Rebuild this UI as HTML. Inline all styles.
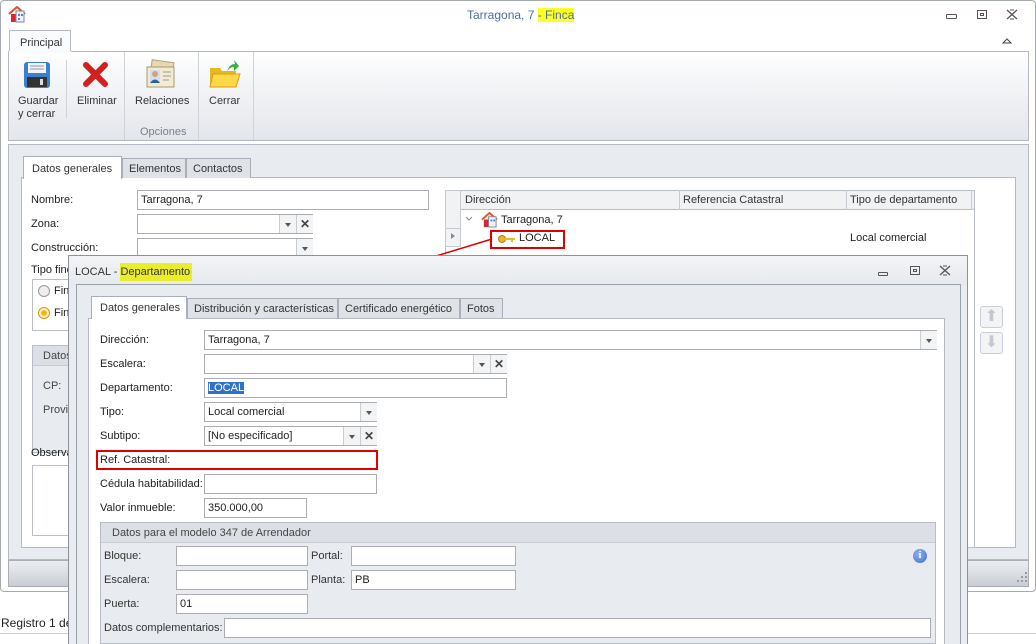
<!DOCTYPE html>
<html><head><meta charset="utf-8">
<style>
*{box-sizing:border-box;margin:0;padding:0}
html,body{width:1036px;height:644px;overflow:hidden}
body{background:#fff;font-family:"Liberation Sans",sans-serif;font-size:11px;color:#1e1e1e;position:relative}
.a{position:absolute}
.in{position:absolute;background:#fff;border:1px solid #abadb3;height:20px;padding:3px 3px;line-height:13px;white-space:nowrap}
.lbl{position:absolute;white-space:nowrap;line-height:13px}
.dd{position:absolute;top:0;bottom:0;width:17px;border-left:1px solid #c9ccd1;background:#f3f4f6}
.dd:after{content:"";position:absolute;left:5px;top:8px;border:3.5px solid transparent;border-top:4px solid #555}
.xb{position:absolute;top:0;bottom:0;width:17px;border-left:1px solid #c9ccd1;background:#f3f4f6;text-align:center;font-weight:bold;font-size:12px;line-height:18px;color:#444}
.tab{position:absolute;height:20px;border:1px solid #a9afb9;border-bottom:none;background:#dfe3e8;padding:4px 6px;line-height:13px;color:#333;white-space:nowrap;overflow:hidden}
.tab.on{background:#fff;height:23px}
.grp{position:absolute;border:1px solid #b9bec6;background:#e8ebf0}
.gh{position:absolute;left:0;right:0;top:0;height:20px;background:#dce0e6;border-bottom:1px solid #c7ccd3;padding:4px 10px;color:#444;white-space:nowrap;overflow:hidden}
</style></head><body>
<!-- main window -->
<div class="a" style="left:0;top:0;width:1036px;height:592px;border:1px solid #a5a9b0;border-radius:4px;background:#fff"></div>
<svg class="a" style="left:8px;top:6px" width="18" height="17" viewBox="0 0 18 17"><path d="M1 8 L9 1 L17 8" fill="none" stroke="#e05020" stroke-width="2"/><rect x="3" y="8" width="5" height="8" fill="#d23"/><rect x="8" y="5" width="8" height="11" fill="#eef3fa" stroke="#7a8aa0"/><rect x="10" y="8" width="2" height="2" fill="#4a8ad0"/><rect x="13" y="8" width="2" height="2" fill="#4a8ad0"/><rect x="10" y="12" width="2" height="2" fill="#4a8ad0"/></svg>
<div class="lbl" style="left:467px;top:9px;color:#4a6fa5;font-size:12px">Tarragona, 7 <span style="background:#ffff22;color:#4a6fa5">- Finca</span></div>
<div class="a" style="left:946px;top:14px;width:11px;height:5px;border:1px solid #555;border-radius:1px"></div>
<div class="a" style="left:977px;top:10px;width:10px;height:9px;border:1px solid #555"><div class="a" style="left:2px;top:2px;width:4px;height:3px;border:1px solid #555"></div></div>
<svg class="a" style="left:1006px;top:9px" width="12" height="11"><path d="M1 1L11 10M11 1L1 10" stroke="#555" stroke-width="1.3"/><path d="M4 1h4M4 10h4" stroke="#555"/></svg>
<svg class="a" style="left:1002px;top:37px" width="10" height="7"><path d="M1 6L5 2L9 6Z" fill="none" stroke="#444"/></svg>
<!-- ribbon -->
<div class="tab on" style="left:9px;top:30px;width:62px;height:22px;background:#fafbfc;padding:6px 10px;border-color:#b4b9c1;font-size:11px">Principal</div>
<div class="a" style="left:8px;top:51px;width:1021px;height:90px;border:1px solid #b4b9c1;background:linear-gradient(#fff,#f5f6f8 30%,#e3e6eb)"></div>
<div class="a" style="left:71px;top:51px;width:958px;height:1px;background:#b4b9c1"></div>
<div class="a" style="left:9px;top:51px;width:62px;height:2px;background:#fafbfc"></div>
<div class="a" style="left:66px;top:60px;width:1px;height:58px;background:#cfd3d9"></div>
<div class="a" style="left:124px;top:52px;width:1px;height:88px;background:#cfd3d9"></div>
<div class="a" style="left:198px;top:52px;width:1px;height:88px;background:#cfd3d9"></div>
<div class="a" style="left:253px;top:52px;width:1px;height:88px;background:#cfd3d9"></div>
<svg class="a" style="left:23px;top:61px" width="28" height="28" viewBox="0 0 28 28"><rect x="1" y="1" width="26" height="26" rx="3" fill="#3a7fd0"/><rect x="5" y="2" width="18" height="10" fill="#f4f6fa"/><path d="M7 5h14M7 8h14" stroke="#8899aa"/><rect x="4" y="16" width="20" height="10" fill="#333"/><rect x="17" y="18" width="3" height="6" fill="#ddd"/></svg>
<svg class="a" style="left:83px;top:62px" width="25" height="25" viewBox="0 0 25 25"><path d="M3 3L22 22M22 3L3 22" stroke="#d4201c" stroke-width="6" stroke-linecap="round"/></svg>
<svg class="a" style="left:145px;top:59px" width="32" height="32" viewBox="0 0 32 32"><rect x="6" y="2" width="22" height="16" fill="#e8d8b0" stroke="#b0a080" transform="rotate(8 16 10)"/><rect x="2" y="8" width="27" height="20" fill="#f3ead0" stroke="#a89870"/><rect x="5" y="11" width="10" height="13" fill="#cfe0f0"/><circle cx="10" cy="15" r="3" fill="#d9a070"/><path d="M5 24q5-7 10 0" fill="#2a5fa8"/><path d="M18 13h8M18 17h8M18 21h6" stroke="#999"/></svg>
<svg class="a" style="left:209px;top:58px" width="32" height="32" viewBox="0 0 32 32"><path d="M1 10h10l2 3h14v16H1z" fill="#e8b820"/><path d="M4 16h27l-4 13H1z" fill="#ffd84a" stroke="#d9a010"/><path d="M18 14q2-8 8-8l-1-4 5 6-5 5v-4q-5 0-7 5z" fill="#3ab040"/></svg>
<div class="lbl" style="left:18px;top:95px;color:#333">Guardar<br>y cerrar</div>
<div class="lbl" style="left:77px;top:95px;color:#333">Eliminar</div>
<div class="lbl" style="left:135px;top:95px;color:#333">Relaciones</div>
<div class="lbl" style="left:209px;top:95px;color:#333">Cerrar</div>
<div class="lbl" style="left:140px;top:126px;color:#7a7f88">Opciones</div>
<!-- body -->
<div class="a" style="left:8px;top:144px;width:1021px;height:416px;background:#e8ebf0;border:1px solid #b4b9c1"></div>
<div class="a" style="left:8px;top:560px;width:1021px;height:27px;background:linear-gradient(#eceef1,#c9cdd3);border:1px solid #a9aeb6"></div>
<svg class="a" style="left:1016px;top:571px" width="12" height="12"><g fill="#999"><rect x="9" y="1" width="2" height="2"/><rect x="5" y="5" width="2" height="2"/><rect x="9" y="5" width="2" height="2"/><rect x="1" y="9" width="2" height="2"/><rect x="5" y="9" width="2" height="2"/><rect x="9" y="9" width="2" height="2"/></g></svg>
<div class="a" style="left:21px;top:177px;width:995px;height:371px;background:#fff;border:1px solid #b4b9c1"></div>
<div class="tab on" style="left:23px;top:156px;width:99px;padding:6px 8px">Datos generales</div>
<div class="tab" style="left:122px;top:158px;width:64px">Elementos</div>
<div class="tab" style="left:186px;top:158px;width:65px">Contactos</div>
<div class="lbl" style="left:31px;top:194px">Nombre:</div>
<div class="in" style="left:137px;top:190px;width:292px">Tarragona, 7</div>
<div class="lbl" style="left:31px;top:218px">Zona:</div>
<div class="in" style="left:137px;top:214px;width:176px"><div class="dd" style="right:16px"></div><div class="xb" style="right:-1px;width:17px">✕</div></div>
<div class="lbl" style="left:31px;top:242px">Construcción:</div>
<div class="in" style="left:137px;top:238px;width:176px"><div class="dd" style="right:-1px"></div></div>
<div class="lbl" style="left:31px;top:264px">Tipo finca</div>
<div class="a" style="left:32px;top:279px;width:50px;height:52px;border:1px solid #b9bec6"></div>
<div class="a" style="left:38px;top:285px;width:12px;height:12px;border-radius:50%;border:1px solid #999;background:#eee"></div>
<div class="lbl" style="left:54px;top:285px">Fin</div>
<div class="a" style="left:38px;top:307px;width:12px;height:12px;border-radius:50%;border:1px solid #c90;background:radial-gradient(#ffb000 35%,#fff4d0 45%)"></div>
<div class="lbl" style="left:54px;top:307px">Fin</div>
<div class="grp" style="left:32px;top:345px;width:50px;height:108px"><div class="gh">Datos</div></div>
<div class="lbl" style="left:43px;top:380px;color:#444">CP:</div>
<div class="lbl" style="left:43px;top:404px;color:#444">Provi</div>
<div class="lbl" style="left:31px;top:447px">Observa</div>
<div class="a" style="left:32px;top:465px;width:50px;height:71px;border:1px solid #b9bec6"></div>
<!-- grid -->
<div class="a" style="left:445px;top:190px;width:530px;height:358px;border:1px solid #b9bec6;background:#fff"></div>
<div class="a" style="left:445px;top:190px;width:530px;height:20px;background:#f1f2f4;border:1px solid #b9bec6"></div>
<div class="a" style="left:445px;top:190px;width:16px;height:57px;background:#f1f2f4;border:1px solid #c8ccd2"></div>
<div class="a" style="left:445px;top:228px;width:16px;height:19px;border:1px solid #c8ccd2"></div>
<div class="a" style="left:451px;top:233px;border:3.5px solid transparent;border-left:4px solid #888"></div>
<div class="a" style="left:679px;top:190px;width:1px;height:20px;background:#c8ccd2"></div>
<div class="a" style="left:846px;top:190px;width:1px;height:20px;background:#c8ccd2"></div>
<div class="a" style="left:971px;top:190px;width:1px;height:20px;background:#c8ccd2"></div>
<div class="lbl" style="left:465px;top:194px;color:#333">Dirección</div>
<div class="lbl" style="left:683px;top:194px;color:#333">Referencia Catastral</div>
<div class="lbl" style="left:850px;top:194px;color:#333">Tipo de departamento</div>
<svg class="a" style="left:465px;top:216px" width="8" height="6"><path d="M1 1L4 4L7 1" fill="none" stroke="#888"/></svg>
<svg class="a" style="left:481px;top:212px" width="17" height="16" viewBox="0 0 18 17"><path d="M1 8 L9 1 L17 8" fill="none" stroke="#e05020" stroke-width="2"/><rect x="3" y="8" width="5" height="8" fill="#d23"/><rect x="8" y="5" width="8" height="11" fill="#eef3fa" stroke="#7a8aa0"/><rect x="10" y="8" width="2" height="2" fill="#4a8ad0"/><rect x="13" y="8" width="2" height="2" fill="#4a8ad0"/></svg>
<div class="lbl" style="left:501px;top:214px">Tarragona, 7</div>
<div class="a" style="left:490px;top:230px;width:75px;height:19px;border:2px solid #e00000"></div>
<svg class="a" style="left:498px;top:234px" width="18" height="10"><circle cx="4" cy="5" r="3.5" fill="#e8b830" stroke="#b08010"/><path d="M7 4h10v2h-2v2h-2V6H7z" fill="#e8b830"/></svg>
<div class="lbl" style="left:519px;top:232px">LOCAL</div>
<div class="lbl" style="left:850px;top:232px">Local comercial</div>
<svg class="a" style="left:390px;top:235px" width="105" height="40"><line x1="102" y1="4" x2="10" y2="32" stroke="#e00000" stroke-width="1.5"/><path d="M5 34 L16 26 L15 34 Z" fill="#e00000"/></svg>
<div class="a" style="left:980px;top:306px;width:23px;height:22px;border:1px solid #ccd;border-radius:3px;background:#f3f4f6;color:#c4c7cc;text-align:center;font-size:16px;line-height:20px">&#x2B06;</div>
<div class="a" style="left:980px;top:332px;width:23px;height:22px;border:1px solid #ccd;border-radius:3px;background:#f3f4f6;color:#c4c7cc;text-align:center;font-size:16px;line-height:20px">&#x2B07;</div>
<div class="lbl" style="left:1px;top:617px;font-size:12px">Registro 1 de</div>
<div class="a" style="left:0;top:633px;width:1036px;height:1px;background:#ccc"></div>
<!-- dialog -->
<div class="a" style="left:68px;top:255px;width:900px;height:392px;background:#e9ecf0;border:1px solid #8d929a"></div>
<div class="a" style="left:69px;top:256px;width:898px;height:30px;background:linear-gradient(#f2f4f6,#e6e9ed)"></div>
<div class="lbl" style="left:75px;top:266px;color:#333">LOCAL - <span style="background:#eaee2a;padding:3px 2px 3px 0">Departamento</span></div>
<div class="a" style="left:878px;top:272px;width:10px;height:4px;border:1px solid #555;border-radius:1px"></div>
<div class="a" style="left:910px;top:266px;width:10px;height:9px;border:1px solid #555"><div class="a" style="left:2px;top:2px;width:4px;height:3px;border:1px solid #555"></div></div>
<svg class="a" style="left:939px;top:265px" width="12" height="11"><path d="M1 1L11 10M11 1L1 10" stroke="#555" stroke-width="1.3"/><path d="M4 1h4M4 10h4" stroke="#555"/></svg>
<div class="a" style="left:76px;top:284px;width:885px;height:370px;border:1px solid #9aa0a8;background:#e8ebf0"></div>
<div class="a" style="left:88px;top:318px;width:857px;height:340px;background:#fff;border:1px solid #b4b9c1"></div>
<div class="tab on" style="left:91px;top:296px;width:96px;padding:5px 8px">Datos generales</div>
<div class="tab" style="left:187px;top:298px;width:151px">Distribución y características</div>
<div class="tab" style="left:338px;top:298px;width:122px">Certificado energético</div>
<div class="tab" style="left:460px;top:298px;width:43px">Fotos</div>
<div class="lbl" style="left:100px;top:334px">Dirección:</div>
<div class="in" style="left:204px;top:330px;width:733px">Tarragona, 7<div class="dd" style="right:-1px"></div></div>
<div class="lbl" style="left:100px;top:358px">Escalera:</div>
<div class="in" style="left:204px;top:354px;width:303px"><div class="dd" style="right:16px"></div><div class="xb" style="right:-1px">✕</div></div>
<div class="lbl" style="left:100px;top:382px">Departamento:</div>
<div class="in" style="left:204px;top:378px;width:303px"><span style="background:#3072c8;color:#fff">LOCAL</span></div>
<div class="lbl" style="left:100px;top:406px">Tipo:</div>
<div class="in" style="left:204px;top:402px;width:173px">Local comercial<div class="dd" style="right:-1px"></div></div>
<div class="lbl" style="left:100px;top:430px">Subtipo:</div>
<div class="in" style="left:204px;top:426px;width:173px">[No especificado]<div class="dd" style="right:16px"></div><div class="xb" style="right:-1px">✕</div></div>
<div class="lbl" style="left:100px;top:454px">Ref. Catastral:</div>
<div class="a" style="left:96px;top:450px;width:282px;height:20px;border:2px solid #e00000"></div>
<div class="lbl" style="left:100px;top:478px">Cédula habitabilidad:</div>
<div class="in" style="left:204px;top:474px;width:173px"></div>
<div class="lbl" style="left:100px;top:502px">Valor inmueble:</div>
<div class="in" style="left:204px;top:498px;width:103px">350.000,00</div>
<div class="grp" style="left:100px;top:522px;width:836px;height:122px"><div class="gh" style="padding-left:11px">Datos para el modelo 347 de Arrendador</div></div>
<div class="lbl" style="left:104px;top:550px;color:#333">Bloque:</div>
<div class="in" style="left:176px;top:546px;width:132px"></div>
<div class="lbl" style="left:311px;top:550px;color:#333">Portal:</div>
<div class="in" style="left:351px;top:546px;width:165px"></div>
<div class="lbl" style="left:104px;top:574px;color:#333">Escalera:</div>
<div class="in" style="left:176px;top:570px;width:132px"></div>
<div class="lbl" style="left:311px;top:574px;color:#333">Planta:</div>
<div class="in" style="left:351px;top:570px;width:165px">PB</div>
<div class="lbl" style="left:104px;top:598px;color:#333">Puerta:</div>
<div class="in" style="left:176px;top:594px;width:132px">01</div>
<div class="lbl" style="left:104px;top:622px;color:#333">Datos complementarios:</div>
<div class="in" style="left:224px;top:618px;width:707px"></div>
<div class="a" style="left:913px;top:549px;width:14px;height:14px;border-radius:50%;background:radial-gradient(circle at 40% 35%,#8fb4ef,#3d6fc8);color:#fff;font-weight:bold;font-size:10px;text-align:center;line-height:14px;font-family:'Liberation Serif',serif">i</div>
</body></html>
